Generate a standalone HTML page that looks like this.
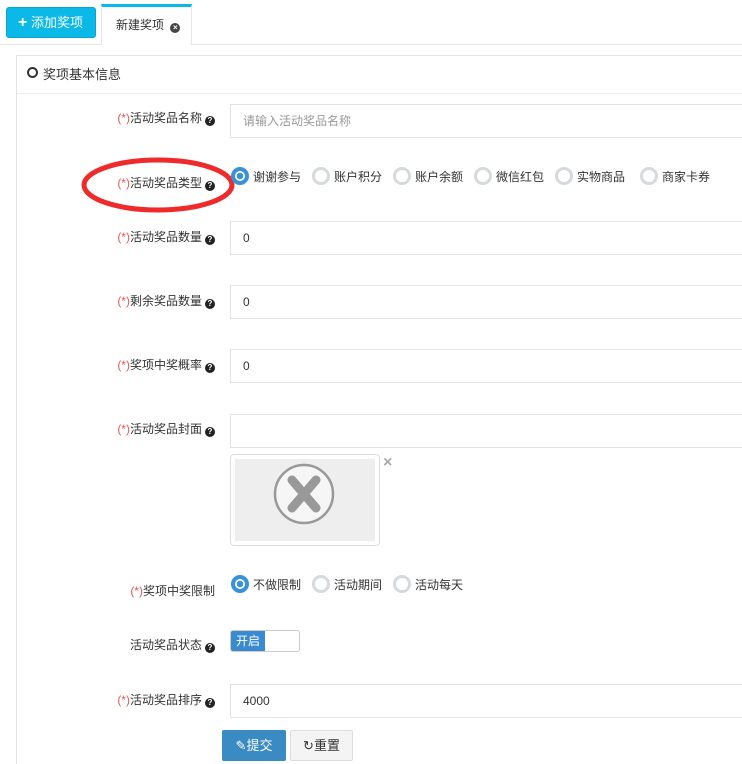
<!DOCTYPE html>
<html style="width:742px;height:764px;overflow:hidden"><head><meta charset="utf-8"><style>
*{box-sizing:border-box}
body{margin:0;width:742px;height:764px;background:#fff;font-family:"Liberation Sans","Noto Sans CJK SC",sans-serif;font-size:12px;color:#333;position:relative;overflow:hidden}
.a{position:absolute}
.lbl{position:absolute;right:527px;font-size:12px;color:#333;white-space:nowrap}
.lbl i{font-style:normal;color:#e05a5a}
.q{display:inline-block;width:10px;height:10px;border-radius:50%;background:#222;color:#fff;font-size:8px;line-height:10px;text-align:center;font-weight:bold;margin-left:3px;vertical-align:-1px}
.inp{position:absolute;left:230px;width:520px;height:34px;border:1px solid #e2e2e2;padding:0 12px;line-height:32px;font-size:12px;color:#333}
.r{position:absolute;display:flex;align-items:center;font-size:12px}
.rd{width:18px;height:18px;border-radius:50%;border:3px solid #d5dadd;margin-right:4px;background:#fff}
.rd.on{border:4px solid #3a91d6;background:radial-gradient(circle,#3a91d6 3px,#fff 3.5px)}
</style></head><body>
<div class="a" style="left:0;top:44px;width:742px;height:1px;background:#e6e6e6"></div>
<div class="a" style="left:6px;top:7px;width:90px;height:31px;background:#0ab9e8;border:1px solid #09a5d0;border-radius:3px;color:#fff;font-size:13px;line-height:29px;padding-left:11px"><b style="font-size:16px">+</b> 添加奖项</div>
<div class="a" style="left:101px;top:4px;width:91px;height:41px;background:#fff;border:1px solid #e6e6e6;border-bottom:none;border-top:3px solid #0ab9e8;font-size:12px;line-height:36px;padding-left:14px">新建奖项 <span class="q" style="background:#444">×</span></div>
<div class="a" style="left:16px;top:55px;width:730px;height:709px;border:1px solid #e4e4e4;border-right:none;border-bottom:none"></div>
<div class="a" style="left:17px;top:93px;width:725px;height:1px;background:#eee"></div>
<div class="a" style="left:27px;top:67px;width:11px;height:11px;border:2px solid #333;border-radius:50%"></div>
<div class="a" style="left:43px;top:64px;font-size:13px">奖项基本信息</div>

<div class="lbl" style="top:109px"><i>(*)</i>活动奖品名称<span class="q">?</span></div>
<div class="inp" style="top:104px;color:#999">请输入活动奖品名称</div>

<div class="lbl" style="top:174px"><i>(*)</i>活动奖品类型<span class="q">?</span></div>
<svg class="a" style="left:80px;top:155px" width="160" height="60"><ellipse cx="78" cy="30" rx="74" ry="25" fill="none" stroke="#ee2a2a" stroke-width="5"/></svg>
<div class="r" style="left:231px;top:167px"><span class="rd on"></span>谢谢参与</div>
<div class="r" style="left:312px;top:167px"><span class="rd"></span>账户积分</div>
<div class="r" style="left:393px;top:167px"><span class="rd"></span>账户余额</div>
<div class="r" style="left:474px;top:167px"><span class="rd"></span>微信红包</div>
<div class="r" style="left:555px;top:167px"><span class="rd"></span>实物商品</div>
<div class="r" style="left:640px;top:167px"><span class="rd"></span>商家卡券</div>

<div class="lbl" style="top:228px"><i>(*)</i>活动奖品数量<span class="q">?</span></div>
<div class="inp" style="top:221px">0</div>
<div class="lbl" style="top:292px"><i>(*)</i>剩余奖品数量<span class="q">?</span></div>
<div class="inp" style="top:285px">0</div>
<div class="lbl" style="top:356px"><i>(*)</i>奖项中奖概率<span class="q">?</span></div>
<div class="inp" style="top:349px">0</div>
<div class="lbl" style="top:420px"><i>(*)</i>活动奖品封面<span class="q">?</span></div>
<div class="inp" style="top:414px"></div>

<div class="a" style="left:230px;top:454px;width:150px;height:92px;border:1px solid #ddd;border-radius:4px;padding:4px"><div style="background:#eee;width:100%;height:100%;position:relative">
<svg class="a" style="left:37px;top:3px" width="64" height="64"><circle cx="32" cy="32" r="29" fill="#f6f6f6" stroke="#999" stroke-width="2.5"/><path d="M20 18 L44 46 M44 18 L20 46" stroke="#999" stroke-width="9" stroke-linecap="round"/></svg></div></div>
<div class="a" style="left:383px;top:454px;color:#aaa;font-size:16px;font-weight:bold">×</div>

<div class="lbl" style="top:582px"><i>(*)</i>奖项中奖限制</div>
<div class="r" style="left:231px;top:575px"><span class="rd on"></span>不做限制</div>
<div class="r" style="left:312px;top:575px"><span class="rd"></span>活动期间</div>
<div class="r" style="left:393px;top:575px"><span class="rd"></span>活动每天</div>

<div class="lbl" style="top:636px">活动奖品状态<span class="q">?</span></div>
<div class="a" style="left:230px;top:630px;width:70px;height:22px;border:1px solid #ccc;border-radius:3px;overflow:hidden"><div style="width:34px;height:100%;background:#3a8ad0;color:#fff;font-size:12px;line-height:20px;text-align:center">开启</div></div>

<div class="lbl" style="top:691px"><i>(*)</i>活动奖品排序<span class="q">?</span></div>
<div class="inp" style="top:684px">4000</div>

<div class="a" style="left:222px;top:730px;width:64px;height:31px;background:#3a8ac3;border-radius:2px;color:#fff;font-size:13px;line-height:31px;text-align:center">✎提交</div>
<div class="a" style="left:290px;top:730px;width:63px;height:31px;background:#f4f4f4;border:1px solid #ddd;border-radius:2px;font-size:13px;line-height:29px;text-align:center">↻重置</div>
</body></html>
